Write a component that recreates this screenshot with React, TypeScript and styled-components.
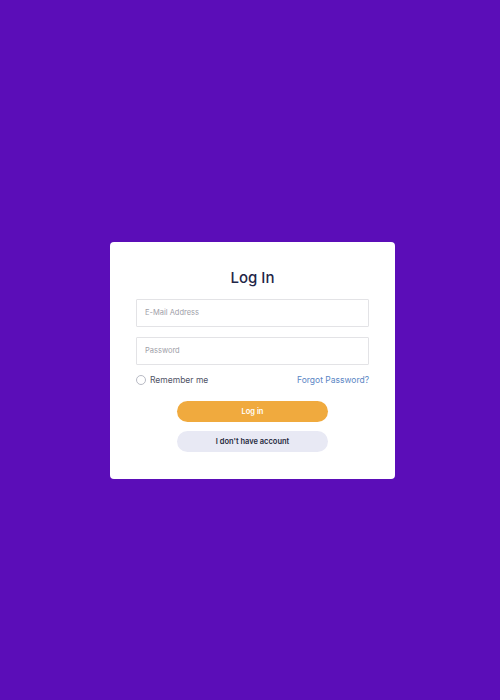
import React from "react";
import styled, { createGlobalStyle } from "styled-components";

const Global = createGlobalStyle`
  * { box-sizing: border-box; }
  html, body { margin: 0; padding: 0; }
  body { background: #5b0db8; font-family: Inter, "Open Sans", sans-serif; }
`;

const Page = styled.div`
  width: 500px;
  height: 700px;
  display: flex;
  align-items: center;
  justify-content: center;
  padding-top: 20px;
  padding-left: 5px;
`;

const Card = styled.div`
  width: 285px;
  background: #ffffff;
  border-radius: 4px;
  padding: 26px 26px 27px;
  display: flex;
  flex-direction: column;
`;

const Title = styled.h1`
  margin: 0 0 11px;
  font-size: 15px;
  line-height: 20px;
  font-weight: 500;
  color: #1f2647;
  text-align: center;
`;

const Input = styled.input`
  width: 100%;
  height: 28px;
  border: 1px solid #e3e3e6;
  border-radius: 1px;
  padding: 0 8px;
  font-family: inherit;
  font-size: 7.5px;
  color: #333;
  margin-bottom: 10px;
  outline: none;
  &::placeholder { color: #a0a0a8; }
`;

const Row = styled.div`
  display: flex;
  align-items: center;
  justify-content: space-between;
  height: 14px;
  margin-top: -2px;
  margin-bottom: 14px;
`;

const Check = styled.label`
  display: flex;
  align-items: center;
  gap: 4px;
  font-size: 8.5px;
  color: #505366;
`;

const Radio = styled.span`
  width: 10px;
  height: 10px;
  border-radius: 50%;
  border: 1px solid #b8bac4;
`;

const Link = styled.a`
  font-size: 8.5px;
  color: #5b86c4;
  text-decoration: none;
`;

const Button = styled.button<{ $primary?: boolean }>`
  align-self: center;
  width: 151px;
  height: 21px;
  border: none;
  border-radius: 11px;
  font-family: inherit;
  font-size: 7.5px;
  font-weight: 600;
  background: ${(p) => (p.$primary ? "#f0aa3e" : "#e8e9f4")};
  color: ${(p) => (p.$primary ? "#ffffff" : "#262a3d")};
  margin-bottom: ${(p) => (p.$primary ? "9px" : "0")};
`;

export default function App() {
  return (
    <>
      <Global />
      <Page>
        <Card>
          <Title>Log In</Title>
          <Input placeholder="E-Mail Address" />
          <Input type="password" placeholder="Password" />
          <Row>
            <Check>
              <Radio />
              Remember me
            </Check>
            <Link href="#">Forgot Password?</Link>
          </Row>
          <Button $primary>Log in</Button>
          <Button>I don't have account</Button>
        </Card>
      </Page>
    </>
  );
}
